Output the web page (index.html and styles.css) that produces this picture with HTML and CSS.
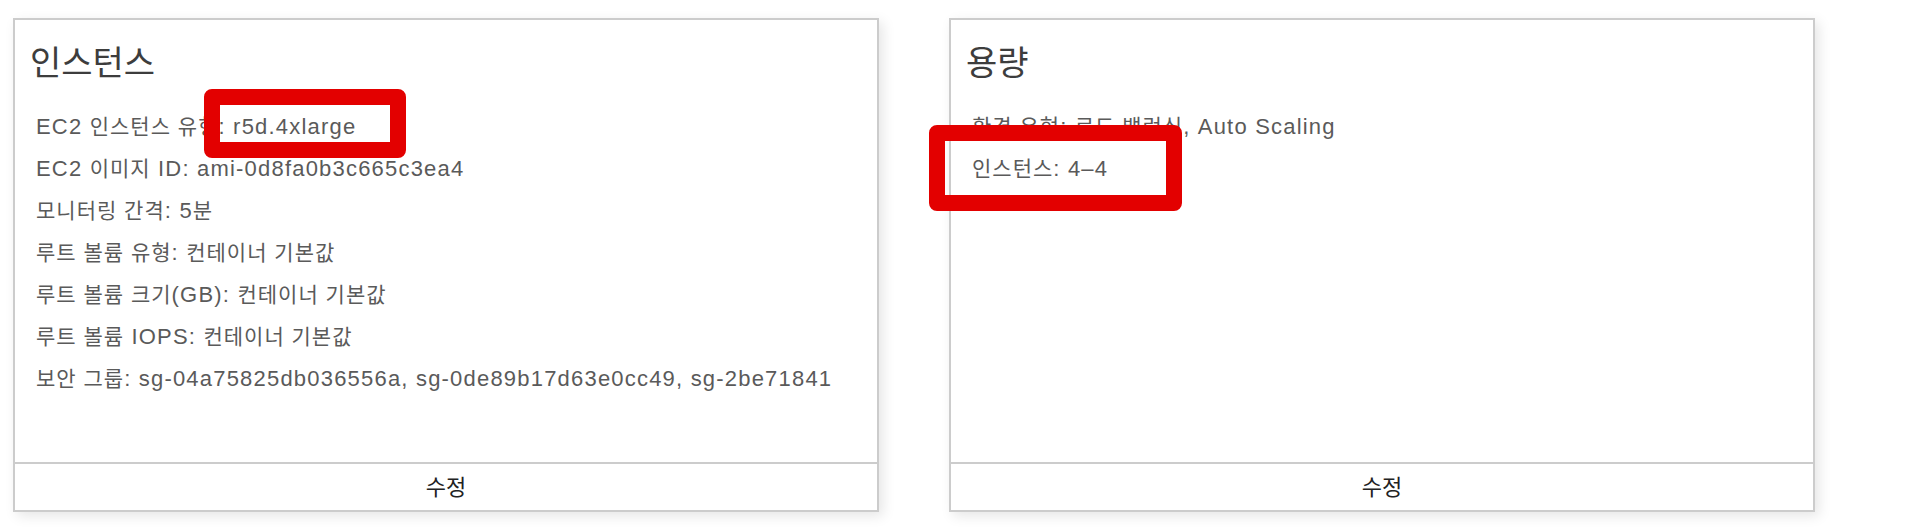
FILE: index.html
```html
<!DOCTYPE html>
<html lang="ko">
<head>
<meta charset="utf-8">
<title>구성</title>
<link rel="stylesheet" href="styles.css">
</head>
<body>
<div class="page">
  <section class="card">
    <div class="card-body">
      <h2 class="card-title">인스턴스</h2>
      <div class="row">EC2 <span class="ko">인스턴스 유형</span>: r5d.4xlarge</div>
      <div class="row">EC2 <span class="ko">이미지</span> ID: ami-0d8fa0b3c665c3ea4</div>
      <div class="row"><span class="ko">모니터링 간격</span>: 5<span class="ko">분</span></div>
      <div class="row"><span class="ko">루트 볼륨 유형</span>: <span class="ko">컨테이너 기본값</span></div>
      <div class="row"><span class="ko">루트 볼륨 크기</span>(GB): <span class="ko">컨테이너 기본값</span></div>
      <div class="row"><span class="ko">루트 볼륨</span> IOPS: <span class="ko">컨테이너 기본값</span></div>
      <div class="row"><span class="ko">보안 그룹</span>: sg-04a75825db036556a, sg-0de89b17d63e0cc49, sg-2be71841</div>
    </div>
    <div class="card-footer">수정</div>
  </section>
  <section class="card">
    <div class="card-body">
      <h2 class="card-title">용량</h2>
      <div class="row"><span class="ko">환경 유형</span>: <span class="ko">로드 밸런싱</span>, Auto Scaling</div>
      <div class="row"><span class="ko">인스턴스</span>: 4–4</div>
    </div>
    <div class="card-footer">수정</div>
  </section>
</div>
<div class="mark mark-type"></div>
<div class="mark mark-count"></div>
</body>
</html>
```
FILE: styles.css
```css
html, body {
  margin: 0;
  padding: 0;
  background: #ffffff;
}

body {
  font-family: "Liberation Sans", Arial, "Noto Sans CJK KR", sans-serif;
  width: 1906px;
  height: 528px;
  overflow: hidden;
  position: relative;
}

.page {
  display: flex;
  gap: 70px;
  padding: 18px 0 0 13px;
}

.card {
  box-sizing: border-box;
  width: 866px;
  height: 494px;
  border: 2px solid #cccccc;
  background: #ffffff;
  box-shadow: 4px 4px 12px rgba(0, 0, 0, 0.10);
  display: flex;
  flex-direction: column;
}

.card-body {
  flex: 1;
  padding: 25px 0 0 21px;
}

.card-title {
  margin: 0 0 25px -6px;
  font-size: 34px;
  line-height: 36px;
  font-weight: normal;
  color: #3d3d3d;
}

.row {
  font-size: 22px;
  letter-spacing: 1.2px;
  line-height: 42px;
  color: #5a5a5a;
  white-space: nowrap;
}

.ko {
  font-size: 21px;
  letter-spacing: 1px;
}

.card-footer {
  box-sizing: border-box;
  height: 48px;
  padding-bottom: 5px;
  border-top: 2px solid #cccccc;
  display: flex;
  align-items: center;
  justify-content: center;
  font-size: 22px;
  color: #222222;
}

.mark {
  position: absolute;
  box-sizing: border-box;
  border: 16px solid #e30000;
  border-radius: 8px;
}

.mark-type {
  left: 204px;
  top: 89px;
  width: 202px;
  height: 69px;
}

.mark-count {
  left: 929px;
  top: 125px;
  width: 253px;
  height: 86px;
}
```
